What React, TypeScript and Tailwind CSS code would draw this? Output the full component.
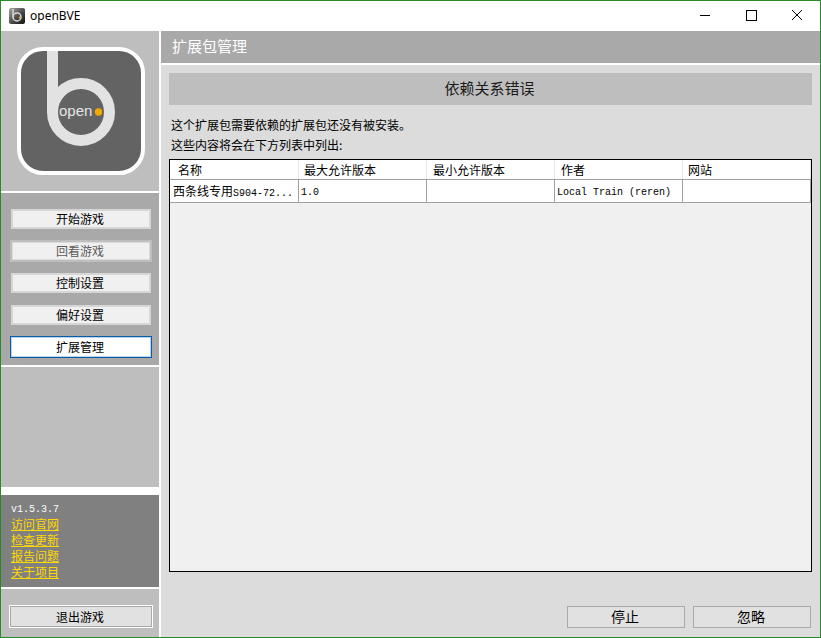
import React from "react";

const cjk = "font-['Noto_Sans_CJK_SC',sans-serif]";
const mono = "font-['Liberation_Mono','Noto_Sans_CJK_SC',monospace]";

function NavButton({ label, state }: { label: string; state?: "disabled" | "active" }) {
  if (state === "disabled") {
    return (
      <div className="h-[22px] w-[142px] border-2 border-[#bebebe] bg-[#f0f0f0] flex items-center justify-center pr-[2px] text-[12px] leading-none text-[#5a5a5a] shadow-[inset_0_0_0_1px_#dcdcdc]">
        {label}
      </div>
    );
  }
  if (state === "active") {
    return (
      <div className="h-[22px] w-[142px] border border-[#0a5aa5] bg-white flex items-center justify-center pr-[2px] text-[12px] leading-none text-black shadow-[inset_0_0_0_1px_#bcd4ea]">
        {label}
      </div>
    );
  }
  return (
    <div className="h-[20px] w-[140px] border-2 border-[#d6d6d6] bg-[#f0f0f0] flex items-center justify-center pr-[2px] text-[12px] leading-none text-black">
      {label}
    </div>
  );
}

function Logo() {
  return (
    <svg width="128" height="128" viewBox="0 0 128 128">
      <rect x="2" y="2" width="124" height="124" rx="24" fill="#636363" stroke="#ffffff" strokeWidth="4" />
      <line x1="35.5" y1="4" x2="35.5" y2="65" stroke="#e2e2e2" strokeWidth="11" />
      <circle cx="64" cy="65" r="28.5" fill="none" stroke="#e2e2e2" strokeWidth="11" />
      <text x="42" y="69" fontSize="15" fill="#e6e6e6" fontFamily="'Liberation Sans',sans-serif">open</text>
      <circle cx="81.5" cy="65" r="3.7" fill="#f5a800" />
    </svg>
  );
}

function AppIcon() {
  return (
    <svg width="16" height="16" viewBox="0 0 16 16">
      <defs>
        <linearGradient id="iconBg" x1="0" y1="0" x2="1" y2="1">
          <stop offset="0" stopColor="#a8a8a8" />
          <stop offset="0.55" stopColor="#4a4a4a" />
          <stop offset="1" stopColor="#101010" />
        </linearGradient>
      </defs>
      <rect x="0" y="0" width="16" height="16" rx="2" fill="url(#iconBg)" />
      <line x1="4" y1="1" x2="4" y2="9" stroke="#d8d8d8" strokeWidth="1.5" />
      <circle cx="8" cy="9" r="4" fill="none" stroke="#d8d8d8" strokeWidth="1.5" />
      <circle cx="10.5" cy="9.5" r="0.9" fill="#f5a800" />
    </svg>
  );
}

const columns = [
  { name: "名称", pad: "pl-[7px]" },
  { name: "最大允许版本", pad: "pl-[5px]" },
  { name: "最小允许版本", pad: "pl-[6px]" },
  { name: "作者", pad: "pl-[6px]" },
  { name: "网站", pad: "pl-[5px]" },
];

export default function App() {
  return (
    <div className={`w-[821px] h-[638px] flex flex-col bg-white border border-[#2a8a2a] overflow-hidden ${cjk}`}>
      {/* title bar */}
      <div className="h-[30px] shrink-0 flex items-center bg-white">
        <div className="ml-[8px] -mt-[1px] flex">
          <AppIcon />
        </div>
        <span className="ml-[5px] -mt-[1px] text-[12px] text-black font-['Noto_Sans',sans-serif]">openBVE</span>
        <div className="ml-auto flex items-center">
          <svg width="46" height="30" viewBox="0 0 46 30">
            <line x1="18" y1="14.5" x2="28" y2="14.5" stroke="#000" />
          </svg>
          <svg width="46" height="30" viewBox="0 0 46 30">
            <rect x="18.5" y="9.5" width="10" height="10" fill="none" stroke="#000" />
          </svg>
          <svg width="46" height="30" viewBox="0 0 46 30">
            <path d="M18 9 L28 19 M28 9 L18 19" stroke="#000" fill="none" />
          </svg>
        </div>
      </div>

      <div className="flex-1 flex min-h-0">
        {/* sidebar */}
        <div className="w-[158px] shrink-0 flex flex-col">
          <div className="h-[160px] bg-[#bebebe] flex items-center justify-center pl-[2px]">
            <Logo />
          </div>
          <div className="h-[172px] mt-[2px] bg-[#a9a9a9] flex flex-col items-center gap-[12px] pt-[16px] pl-[2px]">
            <NavButton label="开始游戏" />
            <div className="-my-px">
              <NavButton label="回看游戏" state="disabled" />
            </div>
            <NavButton label="控制设置" />
            <NavButton label="偏好设置" />
            <div className="-my-px">
              <NavButton label="扩展管理" state="active" />
            </div>
          </div>
          <div className="h-[120px] mt-[2px] bg-[#bebebe]" />
          <div className="h-[92px] mt-[8px] bg-[#808080] pl-[10px] pt-[8px] text-[12px] leading-[16px]">
            <div className={`text-white text-[10px] leading-[13px] ${mono}`}>v1.5.3.7</div>
            <div className="text-[#ffd800] underline">访问官网</div>
            <div className="text-[#ffd800] underline">检查更新</div>
            <div className="text-[#ffd800] underline">报告问题</div>
            <div className="text-[#ffd800] underline">关于项目</div>
          </div>
          <div className="flex-1 mt-[2px] bg-[#bebebe] flex justify-center pt-[16px] pl-[2px]">
            <div className="h-[23px] w-[144px] border border-white bg-[#a9a9a9] p-px">
              <div className="h-full bg-[#e1e1e1] flex items-center justify-center pr-[2px] text-[12px] leading-none text-black">
                退出游戏
              </div>
            </div>
          </div>
        </div>

        {/* main */}
        <div className="flex-1 ml-[2px] flex flex-col min-w-0 bg-[#dcdcdc]">
          <div className="h-[32px] shrink-0 bg-[#a9a9a9] flex items-center pl-[11px] pb-[2px] text-[15px] text-white">
            扩展包管理
          </div>
          <div className="h-[2px] shrink-0 bg-white" />
          <div className="flex-1 flex flex-col px-[8px] pt-[8px] min-h-0">
            <div className="h-[32px] shrink-0 w-[643px] bg-[#bebebe] flex items-center justify-center pb-[2px] pr-[2px] text-[15px] text-[#1a1a1a]">
              依赖关系错误
            </div>
            <div className="mt-[10px] pl-[2px] text-[12px] leading-[20px] text-black">
              <div>这个扩展包需要依赖的扩展包还没有被安装。</div>
              <div>这些内容将会在下方列表中列出:</div>
            </div>
            <div className="mt-[4px] w-[643px] h-[413px] shrink-0 border border-black bg-[#f0f0f0]">
              <div className="flex h-[20px] bg-white text-[12px] leading-none text-black border-b border-[#a0a0a0]">
                {columns.map((c) => (
                  <div key={c.name} className={`w-[128px] ${c.pad} flex items-center border-r border-[#e6e6e6] first:ml-px`}>
                    {c.name}
                  </div>
                ))}
              </div>
              <div className="flex h-[23px] bg-white text-black border-b border-[#a0a0a0]">
                <div className="w-[128px] ml-px pl-[2px] flex items-baseline pt-[2px] border-r border-[#a0a0a0] whitespace-nowrap text-[12px]">
                  西条线专用<span className={`text-[10px] ${mono}`}>S904-72...</span>
                </div>
                <div className={`w-[128px] pl-[2px] pt-[2px] flex items-center border-r border-[#a0a0a0] text-[10px] ${mono}`}>1.0</div>
                <div className="w-[128px] border-r border-[#a0a0a0]" />
                <div className={`w-[128px] pl-[2px] pt-[2px] flex items-center border-r border-[#a0a0a0] whitespace-nowrap text-[10px] ${mono}`}>
                  Local Train (reren)
                </div>
                <div className="w-[128px] border-r border-[#a0a0a0]" />
              </div>
            </div>
            <div className="mt-auto mb-[9px] flex justify-end gap-[8px] pr-[1px]">
              <div className="w-[118px] h-[22px] border border-[#a9a9a9] bg-[#e1e1e1] flex items-center justify-center pb-[1px] pr-[2px] text-[14px] text-black">
                停止
              </div>
              <div className="w-[118px] h-[22px] border border-[#a9a9a9] bg-[#e1e1e1] flex items-center justify-center pb-[1px] pr-[2px] text-[14px] text-black">
                忽略
              </div>
            </div>
          </div>
        </div>
      </div>
    </div>
  );
}
